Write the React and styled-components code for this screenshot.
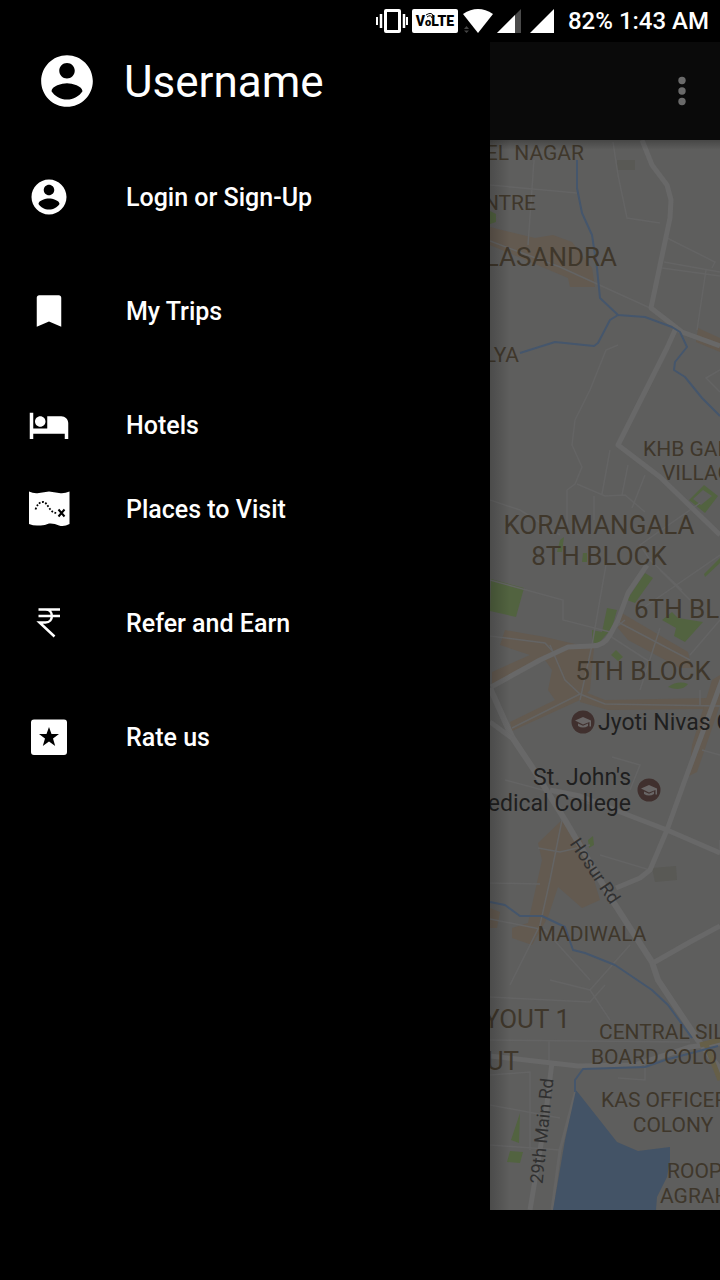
import React from 'react';
import styled, { createGlobalStyle, css } from 'styled-components';

const GlobalStyle = createGlobalStyle`
  * { box-sizing: border-box; }
  body { margin: 0; background: #000; font-family: Roboto, "Liberation Sans", sans-serif; }
`;

const Screen = styled.div`
  display: flex;
  flex-direction: column;
  min-height: 100vh;
  overflow: hidden;
  background: #000;
  color: #fff;
`;

const StatusBar = styled.header`
  display: flex;
  align-items: center;
  justify-content: flex-end;
  gap: 4px;
  height: 42px;
  padding-right: 11px;
  font-size: 24px;
  font-weight: 500;
  line-height: 28px;
`;

const Battery = styled.span`
  margin-right: 2px;
`;

const StatusIcon = styled.svg`
  display: block;
  flex: none;
  width: ${(p) => p.$width}px;
  height: 24px;
  margin-right: ${(p) => p.$after || 0}px;
`;

const VolteBadge = styled.span`
  position: relative;
  display: flex;
  align-items: baseline;
  justify-content: center;
  width: 46px;
  height: 24px;
  padding-top: 4px;
  border-radius: 2px;
  background: #fff;
  color: #000;
  font-size: 14px;
  font-weight: 900;
  line-height: 16px;
`;

const VolteSmall = styled.span`
  font-size: 11px;
`;

const VolteWaves = styled.svg`
  position: absolute;
  left: 13px;
  top: 3px;
  width: 12px;
  height: 8px;
`;

const Body = styled.div`
  display: flex;
  flex: 1;
`;

const Drawer = styled.aside`
  flex: none;
  width: 490px;
  max-width: 85vw;
`;

const Profile = styled.div`
  display: flex;
  align-items: center;
  gap: 26px;
  height: 80px;
  padding-left: 36px;
  font-size: 44px;
  line-height: 52px;
`;

const Menu = styled.nav`
  display: flex;
  flex-direction: column;
  gap: 30px;
  padding-top: 34px;
`;

const MenuGroup = styled.ul`
  margin: 0;
  padding: 0;
  list-style: none;
`;

const MenuLink = styled.a`
  display: flex;
  align-items: center;
  gap: 56px;
  height: 84px;
  padding-left: 28px;
  color: #fff;
  font-size: 25px;
  font-weight: 500;
  line-height: 28px;
  text-decoration: none;
`;

const Icon = styled.svg`
  display: block;
  flex: none;
  width: ${(p) => p.$size || 42}px;
  height: ${(p) => p.$size || 42}px;
  margin-bottom: 3px;
  fill: #fff;
`;

const Content = styled.main`
  display: flex;
  flex: 1;
  flex-direction: column;
  min-width: 0;
`;

const AppBar = styled.div`
  display: flex;
  align-items: center;
  justify-content: flex-end;
  height: 98px;
  padding-right: 14px;
  background: #0a0a0a;
`;

const MoreButton = styled.button`
  display: flex;
  align-items: center;
  justify-content: center;
  width: 48px;
  height: 48px;
  padding: 0;
  border: 0;
  background: none;
`;

const MoreDots = styled.svg`
  width: 8px;
  height: 30px;
  fill: #6a6a6a;
`;

const MapView = styled.section`
  position: relative;
  flex: 1;
  min-height: 1070px;
  overflow: hidden;
  background: #5e5e5d;

  &::after {
    content: '';
    position: absolute;
    inset: 0;
    background:
      linear-gradient(to right, rgba(0, 0, 0, 0.2), transparent 20px),
      linear-gradient(to bottom, rgba(0, 0, 0, 0.25), transparent 10px);
  }
`;

const MapCanvas = styled.svg`
  position: absolute;
  left: 0;
  top: 0;
  width: 230px;
  height: 1070px;
  overflow: visible;
`;

const anchors = {
  start: '0',
  middle: '-50%',
  end: '-100%',
};

const MapLabel = styled.span`
  position: absolute;
  left: ${(p) => p.$x}px;
  top: ${(p) => p.$y}px;
  transform: translate(${(p) => anchors[p.$anchor || 'start']}, -50%) rotate(${(p) => p.$turn || 0}deg);
  color: #3f372b;
  font-size: 21px;
  line-height: 28px;
  white-space: nowrap;
  ${(p) => p.$kind === 'district' && css`font-size: 26px;`}
  ${(p) => p.$kind === 'place' && css`color: #1f1f1f; font-size: 23px;`}
  ${(p) => p.$kind === 'road' && css`color: #303030; font-size: 18px;`}
`;

const NavigationBar = styled.footer`
  height: 70px;
`;

const ACCOUNT =
  'M12 2C6.48 2 2 6.48 2 12s4.48 10 10 10 10-4.48 10-10S17.52 2 12 2zm0 3c1.66 0 3 1.34 3 3s-1.34 3-3 3-3-1.34-3-3 1.34-3 3-3zm0 14.2c-2.5 0-4.71-1.28-6-3.22.03-1.99 4-3.08 6-3.08 1.99 0 5.97 1.09 6 3.08-1.29 1.94-3.5 3.22-6 3.22z';

const AccountIcon = ({ size }) => (
  <Icon $size={size} viewBox="0 0 24 24" aria-hidden="true"><path d={ACCOUNT} /></Icon>
);

const BookmarkIcon = () => (
  <Icon viewBox="0 0 24 24" aria-hidden="true">
    <path d="M17.6 3H6.4C5.6 3 5 3.6 5 4.4V21l7-3 7 3V4.4C19 3.6 18.4 3 17.6 3z" />
  </Icon>
);

const BedIcon = () => (
  <Icon viewBox="0 0 24 24" aria-hidden="true">
    <path d="M7 13c1.66 0 3-1.34 3-3S8.66 7 7 7s-3 1.34-3 3 1.34 3 3 3zm12-6h-8v7H3V5H1v15h2v-3h18v3h2v-9c0-2.21-1.79-4-4-4z" />
  </Icon>
);

const TreasureMapIcon = () => (
  <Icon viewBox="0 0 42 42" aria-hidden="true">
    <path d="M1 3.5Q6 6 11 5Q16 4 21 3.5Q26 4 31 5Q36 6 41.5 3.5V36Q36 39 31 37.5Q26 35 21 35.5Q16 38 11 37.5Q6 38 1 36z" />
    <path d="M7.5 21.5Q10 14 15 14C20 14 21 25 29 25" fill="none" stroke="#000" strokeWidth="1.8" strokeDasharray="1.8 1.6" />
    <path d="M30.5 21.5l6 7M36.5 21.5l-6 7" fill="none" stroke="#000" strokeWidth="2" />
  </Icon>
);

const RupeeIcon = () => (
  <Icon viewBox="0 0 42 42" aria-hidden="true">
    <path d="M10.5 7.5H32M10.5 14H32M15 7.5H17.5C26 7.5 26 20.5 17.5 20.5H11.5L26.5 34.5" fill="none" stroke="#fff" strokeWidth="2.5" />
  </Icon>
);

const StarBoxIcon = () => (
  <Icon viewBox="0 0 42 42" aria-hidden="true">
    <path fillRule="evenodd" d="M6 3.5H36Q39 3.5 39 6.5V36Q39 39 36 39H6Q3 39 3 36V6.5Q3 3.5 6 3.5zM21 11L18.5 18H11L17 22.5L14.8 30L21 25.5L27.2 30L25 22.5L31 18H23.5z" />
  </Icon>
);

const groups = [
  [{ label: 'Login or Sign-Up', Glyph: AccountIcon }],
  [{ label: 'My Trips', Glyph: BookmarkIcon }],
  [{ label: 'Hotels', Glyph: BedIcon }, { label: 'Places to Visit', Glyph: TreasureMapIcon }],
  [{ label: 'Refer and Earn', Glyph: RupeeIcon }],
  [{ label: 'Rate us', Glyph: StarBoxIcon }],
];

const labels = [
  { text: 'EL NAGAR', x: 94, y: 13, anchor: 'end' },
  { text: 'NTRE', x: 46, y: 63, anchor: 'end' },
  { text: 'LASANDRA', x: 127, y: 117, anchor: 'end', kind: 'district' },
  { text: 'LYA', x: 29, y: 215, anchor: 'end' },
  { text: 'KHB GAR', x: 153, y: 309 },
  { text: 'VILLAG', x: 172, y: 333 },
  { text: 'KORAMANGALA', x: 109, y: 385, anchor: 'middle', kind: 'district' },
  { text: '8TH BLOCK', x: 109, y: 416, anchor: 'middle', kind: 'district' },
  { text: '6TH BL', x: 144, y: 469, kind: 'district' },
  { text: '5TH BLOCK', x: 153, y: 531, anchor: 'middle', kind: 'district' },
  { text: 'Jyoti Nivas C', x: 108, y: 583, kind: 'place' },
  { text: "St. John's", x: 141, y: 638, anchor: 'end', kind: 'place' },
  { text: 'edical College', x: 141, y: 664, anchor: 'end', kind: 'place' },
  { text: 'Hosur Rd', x: 105, y: 731, anchor: 'middle', kind: 'road', turn: 56 },
  { text: 'MADIWALA', x: 102, y: 794, anchor: 'middle' },
  { text: 'YOUT 1', x: 80, y: 879, anchor: 'end', kind: 'district' },
  { text: 'UT', x: 29, y: 921, anchor: 'end', kind: 'district' },
  { text: 'CENTRAL SIL', x: 109, y: 892 },
  { text: 'BOARD COLO', x: 101, y: 917 },
  { text: 'KAS OFFICER', x: 111, y: 960 },
  { text: 'COLONY', x: 183, y: 985, anchor: 'middle' },
  { text: 'ROOP', x: 177, y: 1031 },
  { text: 'AGRAH', x: 170, y: 1056 },
  { text: '29th Main Rd', x: 52, y: 991, anchor: 'middle', kind: 'road', turn: -84 },
];

const CollegePin = ({ x, y }) => (
  <g transform={`translate(${x} ${y})`}>
    <circle r="11.5" fill="#40302e" />
    <path d="M-8-1.5L0-5L8-1.5V4.5H6.5V0L0 2.5z" fill="#696666" />
    <path d="M-5 1.5L0 3.8L5 1.5V4Q0 7-5 4z" fill="#696666" />
  </g>
);

function CityMap() {
  return (
    <MapCanvas viewBox="490 140 230 1070" aria-hidden="true">
      <g fill="#635a50">
        <path d="M490 227L535 238L553 235L572 242L592 268L595 287H570L568 278L490 245z" />
        <path d="M698 328L720 338V352L696 342z" />
        <path d="M562 820L582 840L600 900L582 908L558 887L548 917L532 945L512 938V928L528 923L542 860L538 843z" />
        <path d="M505 630L545 637L575 644L594 648L590 690L580 700L512 731L510 722L555 700L548 690L552 670L545 660L492 684V672L530 655L500 645z" />
        <path d="M580 690L605 700L710 698V709L608 710L580 702z" />
        <path d="M620 612L688 652L692 668L680 668L628 640L618 628z" />
        <path d="M490 908L500 912L497 928H490z" />
        <path d="M712 680L720 675V705L697 772L689 776L692 745z" />
      </g>
      <g fill="#526340">
        <path d="M491 579L524 588L516 617L490 611z" />
        <path d="M645 573L653 578L635 603L627 600z" />
        <path d="M607 608L617 610L612 628L598 644L592 642V630L602 632z" />
        <path d="M662 620L672 612L678 618L703 622L685 642L674 636L676 628z" />
        <path d="M611 655L616 650L623 657L618 661z" />
        <path d="M668 687Q678 680 688 684Q682 692 668 687z" />
        <path d="M720 563L705 577L704 574L720 558z" />
        <path d="M520 1113L519 1143L511 1140z" />
        <path d="M510 1151L523 1152L520 1163L507 1162z" />
        <path fillRule="evenodd" d="M704 485L718 496L705 513L689 500zM703 490L693 499L701 505L712 496z" />
        <path d="M490 211L496 214V222L490 224z" />
        <path d="M560 540L564 537L562 552H557zM583 553H587V562H582z" />
        <path d="M588 840L593 836L594 845L589 848z" />
      </g>
      <path d="M617 160H635V170H617zM652 868L676 866L677 880L655 882z" fill="#595955" />
      <g fill="none" stroke="#646464" strokeWidth="1.5">
        <path d="M613 142L618 175L627 218L660 223M534 160L528 245M490 185L577 193" />
        <path d="M490 241L560 267L650 308M667 238L715 262L712 268M664 262L720 272M706 270L697 330M662 268L720 276" />
        <path d="M618 345L606 350L590 390L575 420L572 445L582 467L575 484L567 490V530" />
        <path d="M610 450L602 494M628 465L622 495M645 475L632 508M577 484L605 496L625 495L645 512M490 500L520 510L560 535" />
        <path d="M594 496V520M720 555L640 610M660 570L690 600M700 503L640 545L650 560L682 590" />
        <path d="M490 580L563 600V620L610 632L625 620M606 565L592 645L580 700M550 645L565 680L580 694L605 704L720 706" />
        <path d="M490 636L545 643L556 655M580 694L512 728M618 622L690 660M660 628L640 690M720 620L690 655M610 636L650 662M700 690V706" />
        <path d="M612 757L640 765L630 790M702 750L720 755M505 780L550 792L628 815" />
        <path d="M562 820L550 880L540 925L510 985M538 848L560 852L590 845M490 883L540 884M490 919L545 930L590 980M600 855L650 870M630 945L590 990" />
        <path d="M490 997L590 1002L605 985M550 980L590 990L610 1020M490 1040L690 1042M549 1040V1060M490 1075L530 1072V1150M490 1105L560 1118M490 1145L560 1150" />
        <path d="M618 1078L645 1080V1065M720 370L706 378L720 392M720 840V855" />
        <path d="M576 1090L560 1150L552 1210" strokeWidth="3" />
      </g>
      <g fill="none" stroke="#686868" strokeWidth="5" strokeLinejoin="round">
        <path d="M642 140L652 165L667 185L671 200L670 218L651 308L682 332L720 346" />
        <path d="M676 328L667 348L618 445L660 477L720 535" />
        <path d="M647 565L628 593L618 620L610 635Q604 646 592 646L568 647L540 660L491 687" />
        <path d="M490 688L512 737L532 767L565 820L612 900L652 962L658 980L698 1040L722 1072" strokeWidth="6" />
        <path d="M490 722L512 738M722 680L685 780L667 830L650 870L640 878L616 888M550 790L580 796L628 815L667 830L720 853M653 963L690 942L720 926" />
        <path d="M490 1056L578 1066L635 1065L690 1047L720 1043M552 1062L545 1120L530 1210" />
      </g>
      <path d="M705 1042L720 1080M700 1045L720 1040" fill="none" stroke="#665f48" strokeWidth="5" />
      <path d="M576 1090L617 1142L638 1151L670 1147V1160L667 1177L657 1197L656 1210H553L565 1140z" fill="#435366" />
      <g fill="none" stroke="#45566c" strokeWidth="2" strokeLinejoin="round">
        <path d="M577 160V188L582 213L592 235L597 268L600 298L618 315L645 317L672 327L680 332L687 347L675 362L674 370L685 377L702 398L720 416" />
        <path d="M618 315L610 320L598 343L594 346L555 342L520 353" />
        <path d="M490 902L505 905L520 916H542L565 927L573 950L585 953L615 965L652 990L668 1005L692 1038" />
        <path d="M575 1092V1080L583 1069L645 1067L665 1060L718 1046" />
      </g>
      <CollegePin x={583} y={722} />
      <CollegePin x={649} y={790} />
    </MapCanvas>
  );
}

export default function App() {
  return (
    <>
      <GlobalStyle />
      <Screen>
        <StatusBar>
          <StatusIcon $width={32} viewBox="0 0 32 24" aria-hidden="true">
            <path fillRule="evenodd" d="M10 0H23Q25 0 25 2V22Q25 24 23 24H10Q8 24 8 22V2Q8 0 10 0zM11 3V21H22V3z" fill="#fff" />
            <path d="M1 8V16M31 8V16" stroke="#fff" strokeWidth="2" />
            <path d="M5 5V19M28 5V19" stroke="#fff" strokeWidth="2.5" />
          </StatusIcon>
          <VolteBadge>
            V<VolteSmall>o</VolteSmall>LTE
            <VolteWaves viewBox="0 0 12 8" aria-hidden="true">
              <path d="M1 3Q7-1 9 5M2 5Q6 2 7 6" fill="none" stroke="#000" />
            </VolteWaves>
          </VolteBadge>
          <StatusIcon $width={31} viewBox="0 0 31 24" aria-hidden="true">
            <path d="M1 5Q16-5 31 5L16 24z" fill="#fff" />
            <path d="M2 20L4.5 17L7 20zM2 21.5L4.5 24L7 21.5z" fill="#444" />
          </StatusIcon>
          <StatusIcon $width={24} $after={5} viewBox="0 0 24 24" aria-hidden="true">
            <path d="M24 0V24H0z" fill="#4a4a4a" />
            <path d="M18 6V24H0z" fill="#fff" />
          </StatusIcon>
          <StatusIcon $width={24} $after={10} viewBox="0 0 24 24" aria-hidden="true">
            <path d="M24 0V24H0z" fill="#fff" />
          </StatusIcon>
          <Battery>82%</Battery>
          <time>1:43 AM</time>
        </StatusBar>
        <Body>
          <Drawer>
            <Profile>
              <AccountIcon size={62} />
              <span>Username</span>
            </Profile>
            <Menu aria-label="Main menu">
              {groups.map((items) => (
                <MenuGroup key={items[0].label}>
                  {items.map(({ label, Glyph }) => (
                    <li key={label}>
                      <MenuLink href="#"><Glyph />{label}</MenuLink>
                    </li>
                  ))}
                </MenuGroup>
              ))}
            </Menu>
          </Drawer>
          <Content>
            <AppBar>
              <MoreButton aria-label="More options">
                <MoreDots viewBox="0 0 8 30" aria-hidden="true">
                  <circle cx="4" cy="4.5" r="3.7" />
                  <circle cx="4" cy="15" r="3.7" />
                  <circle cx="4" cy="25.5" r="3.7" />
                </MoreDots>
              </MoreButton>
            </AppBar>
            <MapView aria-label="Map">
              <CityMap />
              {labels.map(({ text, x, y, anchor, kind, turn }) => (
                <MapLabel key={text} $x={x} $y={y} $anchor={anchor} $kind={kind} $turn={turn}>{text}</MapLabel>
              ))}
            </MapView>
          </Content>
        </Body>
        <NavigationBar />
      </Screen>
    </>
  );
}
